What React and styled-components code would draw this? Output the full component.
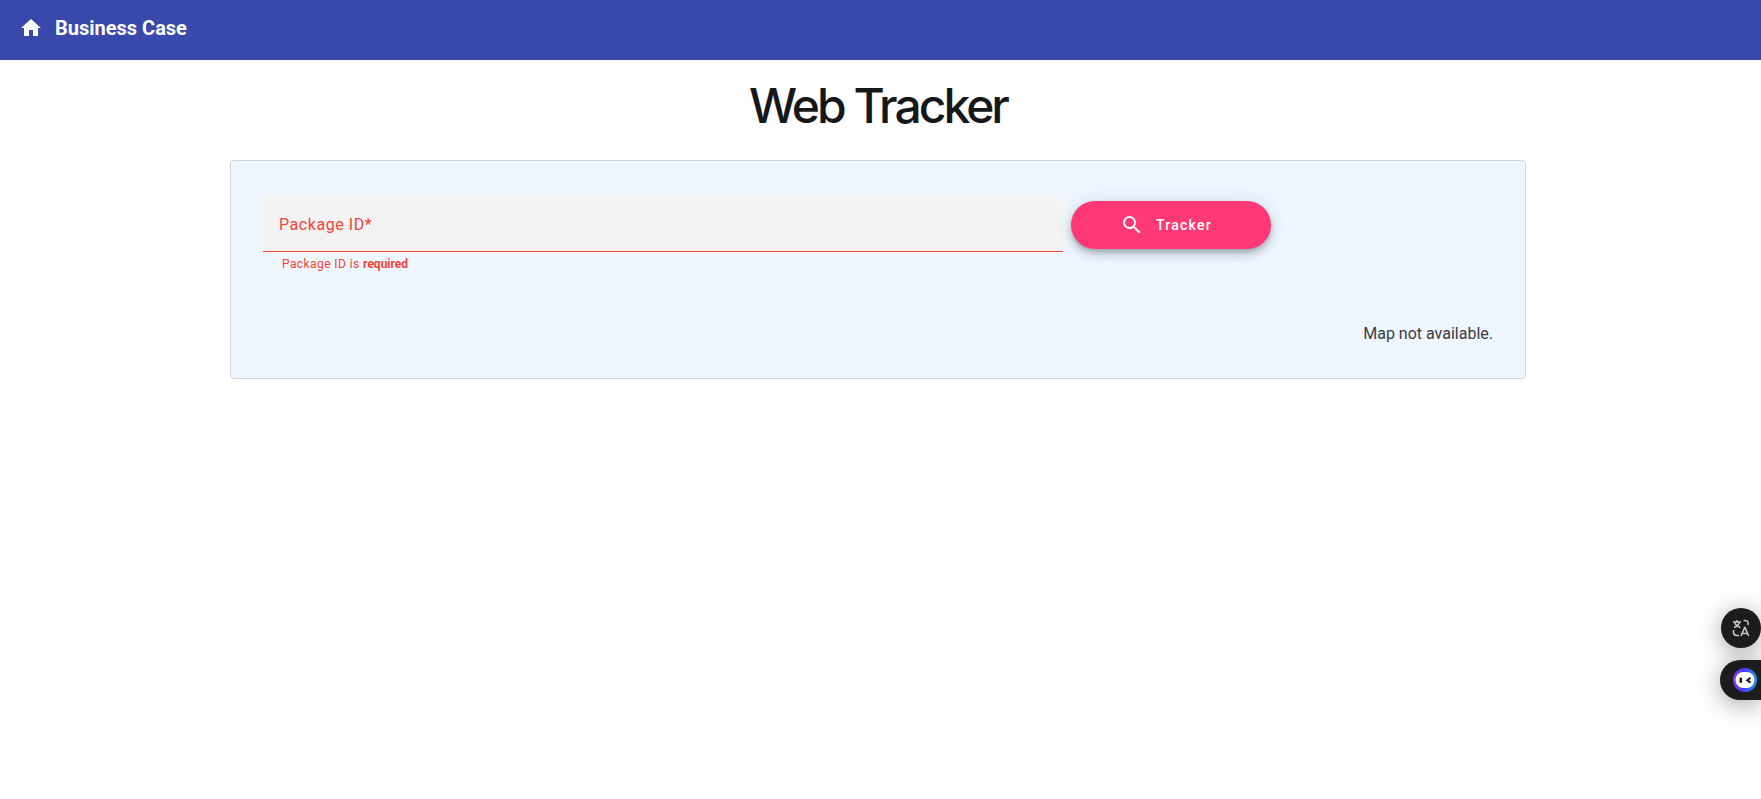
import React, { useState } from 'react';
import styled, { createGlobalStyle } from 'styled-components';
import { MdHome, MdSearch } from 'react-icons/md';

const GlobalStyle = createGlobalStyle`
  *, *::before, *::after { box-sizing: border-box; }
  body {
    margin: 0;
    background: #fff;
    color: #161718;
    font-family: Inter, sans-serif;
    overflow-x: hidden;
  }
`;

const Toolbar = styled.header`
  display: flex;
  align-items: flex-start;
  height: 60px;
  padding: 16px 19px;
  background: #3849ab;
`;

const HomeLink = styled.a`
  display: flex;
  align-items: center;
  gap: 12px;
  color: #fff;
  font: 700 20px/24px Roboto, sans-serif;
  text-decoration: none;
`;

const Page = styled.main`
  display: flex;
  flex-direction: column;
  align-items: center;
  padding: 16px 5px 32px 0;
`;

const Title = styled.h1`
  margin: 0 0 24px;
  font-size: 48px;
  font-weight: 500;
  line-height: 60px;
  letter-spacing: -3px;
`;

const Panel = styled.section`
  width: calc(100% - 460px);
  min-width: 1074px;
  padding: 35px 32px 32px;
  border: 1px solid #cbd5e1;
  border-radius: 4px;
  background: #eef6ff;
`;

const TrackForm = styled.form`
  display: flex;
  align-items: flex-start;
  gap: 8px;
`;

const Field = styled.div`
  width: 800px;
`;

const FieldBox = styled.div`
  display: grid;
  height: 56px;
  padding-top: 2px;
  border-bottom: 1px solid #f44336;
  border-radius: 4px 4px 0 0;
  background: #f3f3f3;
  font: 400 16px/24px Roboto, sans-serif;
  letter-spacing: 0.035em;
`;

const Label = styled.label`
  grid-area: 1 / 1;
  align-self: center;
  padding-left: 16px;
  color: #f44336;
  pointer-events: none;
  visibility: ${({ $filled }) => ($filled ? 'hidden' : 'visible')};
`;

const Input = styled.input`
  grid-area: 1 / 1;
  width: 100%;
  padding: 0 16px;
  border: 0;
  outline: 0;
  background: transparent;
  color: #161718;
  font: inherit;
  letter-spacing: inherit;
`;

const Hint = styled.p`
  margin: 2px 0 0;
  padding-left: 19px;
  color: #f44336;
  font: 400 12px/20px Roboto, sans-serif;
  letter-spacing: 0.035em;

  strong {
    font-weight: 700;
    letter-spacing: 0;
  }
`;

const TrackButton = styled.button`
  display: flex;
  align-items: center;
  justify-content: center;
  gap: 12px;
  width: 200px;
  height: 48px;
  margin-top: 5px;
  padding: 0 10px 0 0;
  border: 0;
  border-radius: 24px;
  background: #ff3975;
  box-shadow: 0 3px 5px -1px rgba(0, 0, 0, 0.2), 0 6px 10px rgba(0, 0, 0, 0.14),
    0 1px 18px rgba(0, 0, 0, 0.12);
  color: #fff;
  font: 500 14px/20px Roboto, sans-serif;
  letter-spacing: 0.09em;
  cursor: pointer;
`;

const MapNote = styled.p`
  margin: 48px 0 0;
  color: #3c3c43;
  font: 400 16px/24px Roboto, sans-serif;
  text-align: right;
`;

const Dock = styled.aside`
  position: fixed;
  right: 0;
  bottom: 99px;
  display: flex;
  flex-direction: column;
  align-items: flex-end;
  gap: 12px;
`;

const DockButton = styled.button`
  display: flex;
  align-items: center;
  justify-content: ${({ $tab }) => ($tab ? 'flex-end' : 'center')};
  width: ${({ $tab }) => ($tab ? 41 : 40)}px;
  height: 40px;
  padding: ${({ $tab }) => ($tab ? '0 4px 0 0' : '0')};
  border: 0;
  border-radius: ${({ $tab }) => ($tab ? '20px 0 0 20px' : '50%')};
  background: #1c1c1c;
  box-shadow: 0 4px 24px rgba(0, 0, 0, 0.36);
  cursor: pointer;
`;

function TranslateIcon() {
  return (
    <svg width="18" height="18" viewBox="0 0 18 18" fill="none" stroke="#c9c9cc" strokeWidth="1.5" aria-hidden="true">
      <path d="M1 3h8M5 1v2M2 8.5C5 7.5 7 5.5 7.6 3M2.4 3C3.2 5.5 5.5 7.5 8.5 8.5" />
      <path d="M11.5 1.5h1.8a2.8 2.8 0 0 1 2.8 2.8V6" />
      <path d="M1.5 11v2.2A3.2 3.2 0 0 0 4.7 16.4H7" />
      <path d="M9 17l3.6-8.4h.4L16.7 17M10.2 14.4h5.3" />
    </svg>
  );
}

function AssistantIcon() {
  return (
    <svg width="24" height="24" viewBox="0 0 24 24" aria-hidden="true">
      <defs>
        <linearGradient id="ring" x1="0" y1="0.6" x2="1" y2="0.7">
          <stop offset="0" stopColor="#9333f5" />
          <stop offset="0.4" stopColor="#4538ff" />
          <stop offset="1" stopColor="#1a9be8" />
        </linearGradient>
      </defs>
      <circle cx="12" cy="12" r="12" fill="url(#ring)" />
      <rect x="2.5" y="4" width="19" height="16" rx="8" fill="#fff" />
      <rect x="6.5" y="9.5" width="2.6" height="5.4" rx="1.2" fill="#161616" />
      <path d="M17.5 9.8l-3.2 2.4 3.2 2.4" fill="none" stroke="#161616" strokeWidth="2" />
    </svg>
  );
}

export default function App() {
  const [packageId, setPackageId] = useState('');

  return (
    <>
      <GlobalStyle />
      <Toolbar>
        <HomeLink href="#">
          <MdHome size={24} aria-hidden="true" />
          Business Case
        </HomeLink>
      </Toolbar>
      <Page>
        <Title>Web Tracker</Title>
        <Panel>
          <TrackForm noValidate onSubmit={(event) => event.preventDefault()}>
            <Field>
              <FieldBox>
                <Input
                  id="package-id"
                  required
                  aria-describedby="package-id-hint"
                  value={packageId}
                  onChange={(event) => setPackageId(event.target.value)}
                />
                <Label htmlFor="package-id" $filled={packageId !== ''}>Package ID*</Label>
              </FieldBox>
              <Hint id="package-id-hint">
                Package ID is <strong>required</strong>
              </Hint>
            </Field>
            <TrackButton type="submit">
              <MdSearch size={24} aria-hidden="true" />
              Tracker
            </TrackButton>
          </TrackForm>
          <MapNote>Map not available.</MapNote>
        </Panel>
      </Page>
      <Dock>
        <DockButton type="button" aria-label="Translate">
          <TranslateIcon />
        </DockButton>
        <DockButton type="button" aria-label="Assistant" $tab>
          <AssistantIcon />
        </DockButton>
      </Dock>
    </>
  );
}
